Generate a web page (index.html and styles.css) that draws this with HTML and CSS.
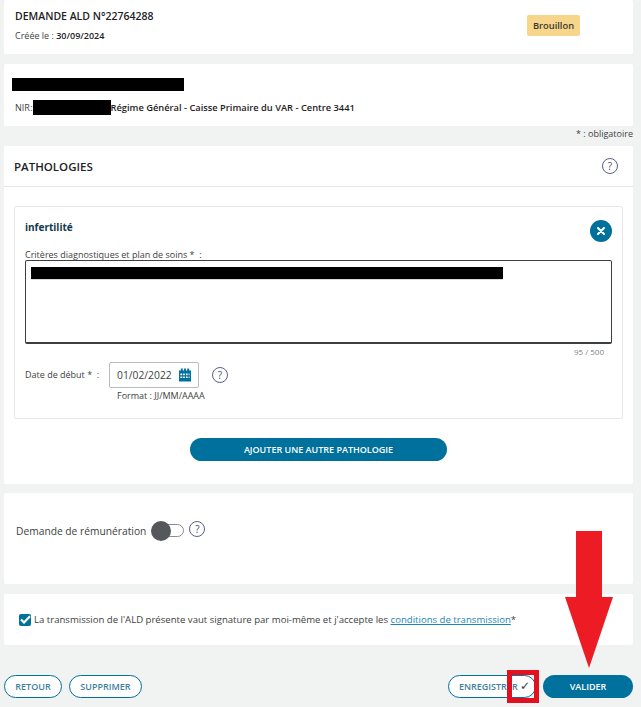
FILE: index.html
```html
<!DOCTYPE html>
<html lang="fr">
  <head>
    <meta charset="UTF-8" />
    <title>Demande ALD</title>
    <link rel="stylesheet" href="styles.css">
  </head>
  <body>
    <div class="page">
      <!-- En-tete demande -->
      <section class="card card-head">
        <div>
          <h1 class="head-title">DEMANDE ALD N°22764288</h1>
          <p class="head-date">Créée le : <b>30/09/2024</b></p>
        </div>
        <span class="badge">Brouillon</span>
      </section>

      <!-- Patient -->
      <section class="card card-patient">
        <div class="mask mask-name"></div>
        <p class="nir">NIR :<span class="mask mask-nir"></span><b>Régime Général - Caisse Primaire du VAR - Centre 3441</b></p>
      </section>

      <p class="required-note">* : obligatoire</p>

      <!-- Pathologies -->
      <section class="card card-patho">
        <div class="patho-header">
          <h2>PATHOLOGIES</h2>
          <span class="help">?</span>
        </div>
        <div class="patho-body">
          <div class="patho-item">
            <div class="item-top">
              <h3>infertilité</h3>
              <span class="close-btn">
                <svg width="8" height="8" viewBox="0 0 8 8"><path d="M1 1 7 7M7 1 1 7" stroke="#fff" stroke-width="2" stroke-linecap="round"/></svg>
              </span>
            </div>
            <label class="field-label">Critères diagnostiques et plan de soins *&nbsp; :</label>
            <div class="textarea">
              <div class="mask mask-text"></div>
            </div>
            <div class="counter">95 / 500</div>
            <div class="date-row">
              <label class="field-label">Date de début *&nbsp; :</label>
              <div class="date-input">
                01/02/2022
                <svg width="12" height="14" viewBox="0 0 13 14">
                  <path fill="#00709c" fill-rule="evenodd" d="M0 2h2V0h2v2h1.500V0h2v2H9V0h2v2h2v12H0zM1.500 5.500v1.800h2V5.500zm3 0v1.800h1.800V5.500zm3 0v1.800h1.800V5.500zm-6 3v1.800h2V8.500zm3 0v1.800h1.800V8.500zm3 0v1.800h1.800V8.500zm2.900-3v1.800h1V5.500zm0 3v1.800h1V8.500z"/>
                </svg>
              </div>
              <span class="help">?</span>
            </div>
            <div class="date-format">Format : JJ/MM/AAAA</div>
          </div>
          <div class="add-row">
            <button class="btn btn-fill btn-add">AJOUTER UNE AUTRE PATHOLOGIE</button>
          </div>
        </div>
      </section>

      <!-- Remuneration -->
      <section class="card card-remu">
        <span class="remu-label">Demande de rémunération</span>
        <span class="toggle"><span class="knob"></span></span>
        <span class="help">?</span>
      </section>

      <!-- Signature -->
      <section class="card card-sign">
        <span class="checkbox">
          <svg width="11" height="9" viewBox="0 0 11 9"><path d="M1 4.500 4 7.500 10 1.300" fill="none" stroke="#fff" stroke-width="2.200"/></svg>
        </span>
        <span>La transmission de l'ALD présente vaut signature par moi-même et j'accepte les <a href="#">conditions de transmission</a>*</span>
      </section>

      <div class="actions">
        <div class="actions-group">
          <button class="btn btn-line btn-back">RETOUR</button>
          <button class="btn btn-line btn-delete">SUPPRIMER</button>
        </div>
        <div class="actions-group">
          <button class="btn btn-line btn-save">ENREGISTRER <span class="save-check">✓</span></button>
          <button class="btn btn-fill btn-validate">VALIDER</button>
        </div>
      </div>
    </div>

    <!-- Annotations rouges par-dessus la capture -->
    <svg class="arrow" width="48" height="137" viewBox="0 0 48 137">
      <path fill="#ed1c24" d="M11 0H37V66H48L24 137 0 66H11z"/>
    </svg>
    <div class="red-box"></div>
  </body>
</html>
```

FILE: styles.css
```css
* {
  box-sizing: border-box;
}

body {
  margin: 0;
  background-color: #f1f3f3;
  font-family: 'Open Sans', sans-serif;
  color: #3c3f40;
  font-size: 9px;
}

.page {
  position: relative;
  height: 707px;
  padding: 0 8px 0 4px;
  overflow: hidden;
}

p,
h1,
h2,
h3 {
  margin: 0;
}

.card {
  background-color: #fff;
  border-radius: 2px;
}

.mask {
  background-color: #000;
}

/* En-tete */
.card-head {
  display: flex;
  justify-content: space-between;
  height: 54px;
  padding: 9px 53px 0 11px;
}

.head-title {
  font-size: 10.500px;
  font-weight: 600;
  line-height: 15px;
  color: #1d2224;
}

.head-date {
  margin-top: 5px;
  line-height: 14px;
}

.head-date b {
  color: #1d2224;
  font-weight: 600;
}

.badge {
  align-self: flex-start;
  margin-top: 6px;
  width: 53px;
  height: 21px;
  background-color: #f7d58a;
  border-radius: 2px;
  color: #3a3a30;
  font-size: 9.300px;
  font-weight: 600;
  line-height: 21px;
  text-align: center;
}

/* Patient */
.card-patient {
  height: 62px;
  margin-top: 10px;
  padding: 14px 0 0 8px;
}

.mask-name {
  width: 172px;
  height: 13px;
}

.nir {
  display: flex;
  align-items: center;
  height: 15px;
  margin: 9px 0 0 3px;
  word-spacing: -2px;
}

.nir b {
  color: #1d2224;
  font-size: 9.300px;
  font-weight: 600;
  word-spacing: 0;
}

.mask-nir {
  width: 78px;
  height: 15px;
}

.required-note {
  height: 20px;
  line-height: 16px;
  text-align: right;
}

/* Pathologies */
.card-patho {
  height: 338px;
}

.patho-header {
  display: flex;
  align-items: center;
  justify-content: space-between;
  height: 41px;
  padding: 0 15px 0 10px;
  border-bottom: 1px solid #e6e8e8;
}

.patho-header h2 {
  font-size: 11.500px;
  font-weight: 600;
  color: #1d2224;
}

.help {
  display: inline-block;
  flex: none;
  width: 16px;
  height: 16px;
  border: 1px solid #5a5f8a;
  border-radius: 50%;
  color: #4a4f70;
  font-size: 10px;
  line-height: 14px;
  text-align: center;
}

.patho-body {
  padding: 19px 10px 0;
}

.patho-item {
  height: 213px;
  padding: 13px 10px 0;
  border: 1px solid #e6e8e8;
  border-radius: 2px;
}

.item-top {
  display: flex;
  justify-content: space-between;
  height: 28px;
}

.item-top h3 {
  font-size: 10px;
  font-weight: 700;
  color: #12384d;
  line-height: 14px;
}

.close-btn {
  display: flex;
  align-items: center;
  justify-content: center;
  width: 22px;
  height: 22px;
  border-radius: 50%;
  background-color: #00709c;
}

.field-label {
  font-size: 9px;
  line-height: 14px;
}

.textarea {
  height: 84px;
  margin-top: -2px;
  padding: 6px 5px;
  border: 1px solid #3c3f40;
  border-bottom-width: 2px;
  border-radius: 2px;
}

.mask-text {
  width: 472px;
  height: 12px;
  box-shadow: 0 1px 0 #d5d8de;
}

.counter {
  height: 17px;
  padding-right: 8px;
  color: #80868a;
  font-size: 8px;
  line-height: 15px;
  text-align: right;
}

.date-row {
  display: flex;
  align-items: center;
  height: 27px;
}

.date-row .field-label {
  width: 84px;
  margin-top: 1px;
}

.date-input {
  display: flex;
  align-items: center;
  justify-content: space-between;
  width: 90px;
  height: 26px;
  padding: 0 7px;
  border: 1px solid #b9bcbe;
  border-radius: 2px;
  font-size: 10.300px;
}

.date-row .help {
  margin-left: 13px;
}

.date-format {
  margin: 1px 0 0 92px;
  line-height: 13px;
}

.add-row {
  display: flex;
  justify-content: center;
  margin-top: 19px;
}

/* Boutons */
.btn {
  height: 23px;
  padding: 0;
  border-radius: 12px;
  font-family: inherit;
  font-size: 9px;
  font-weight: 600;
}

.btn-fill {
  border: 0;
  background-color: #00709c;
  color: #fff;
}

.btn-line {
  border: 1.500px solid #00709c;
  background-color: #fff;
  color: #3f7f9c;
}

.btn-add {
  width: 257px;
}

.btn-back {
  width: 58px;
}

.btn-delete {
  width: 73px;
}

.btn-save {
  width: 88px;
  padding-left: 5px;
  white-space: nowrap;
}

.save-check {
  color: #2b3a44;
  font-family: 'DejaVu Sans', sans-serif;
  font-size: 12px;
  font-weight: 400;
  line-height: 12px;
}

.btn-validate {
  width: 90px;
}

/* Remuneration */
.card-remu {
  display: flex;
  align-items: flex-start;
  height: 91px;
  margin-top: 9px;
  padding: 28px 0 0 12px;
}

.remu-label {
  font-size: 10.250px;
  line-height: 20px;
}

.toggle {
  position: relative;
  width: 32px;
  height: 13px;
  margin: 3px 0 0 6px;
  border: 1.500px solid #8a8d8f;
  border-radius: 7px;
}

.knob {
  position: absolute;
  left: -2px;
  top: -4px;
  width: 20px;
  height: 20px;
  border-radius: 50%;
  background-color: #54585a;
}

.card-remu .help {
  margin: 0 0 0 5px;
}

/* Signature */
.card-sign {
  display: flex;
  align-items: center;
  gap: 3px;
  height: 51px;
  margin-top: 10px;
  padding: 0 0 0 15px;
  font-size: 9.580px;
}

.checkbox {
  display: flex;
  align-items: center;
  justify-content: center;
  width: 12px;
  height: 12px;
  border-radius: 2px;
  background-color: #00709c;
}

.card-sign a {
  color: #1a86b8;
}

.actions {
  display: flex;
  justify-content: space-between;
  margin-top: 30px;
}

.actions-group {
  display: flex;
  gap: 7px;
}

/* Annotations */
.arrow {
  position: absolute;
  left: 565px;
  top: 531px;
}

.red-box {
  position: absolute;
  left: 507px;
  top: 670px;
  width: 32px;
  height: 33px;
  border: 5px solid #e3101f;
}
```
